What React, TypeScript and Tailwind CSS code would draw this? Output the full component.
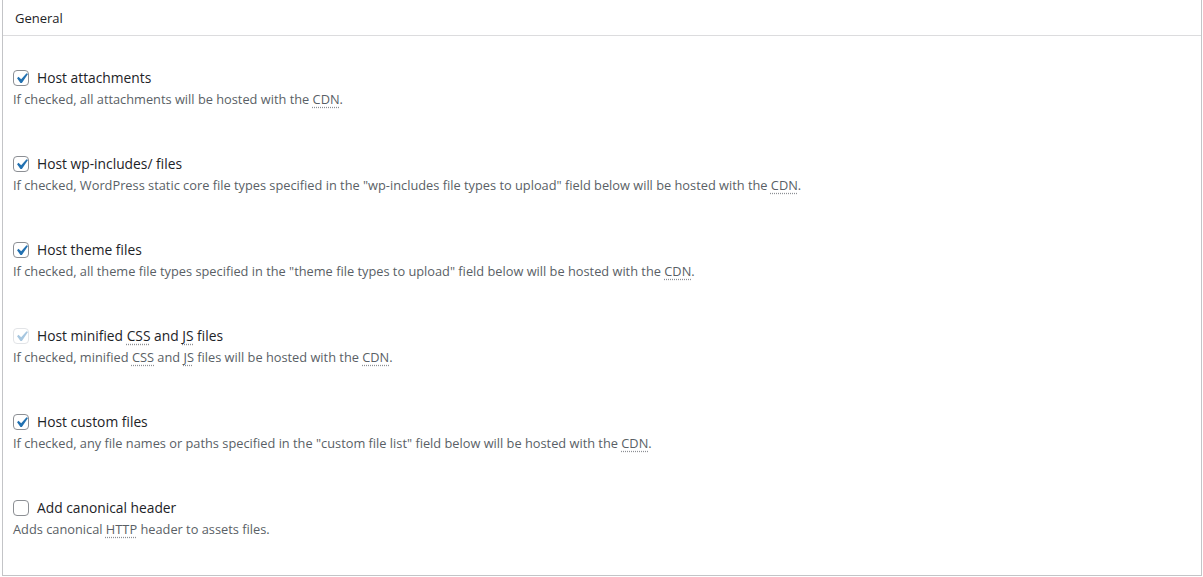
import type { ReactNode } from "react";

type Item = {
  label: ReactNode;
  desc: ReactNode;
  checked: boolean;
  disabled?: boolean;
};

function Abbr({ children }: { children: ReactNode }) {
  return (
    <abbr className="underline decoration-dotted decoration-[#8c8f94] underline-offset-[3px]">{children}</abbr>
  );
}

const items: Item[] = [
  {
    label: "Host attachments",
    desc: (
      <>
        If checked, all attachments will be hosted with the <Abbr>CDN</Abbr>.
      </>
    ),
    checked: true,
  },
  {
    label: "Host wp-includes/ files",
    desc: (
      <>
        If checked, WordPress static core file types specified in the "wp-includes file types to upload" field below
        will be hosted with the <Abbr>CDN</Abbr>.
      </>
    ),
    checked: true,
  },
  {
    label: "Host theme files",
    desc: (
      <>
        If checked, all theme file types specified in the "theme file types to upload" field below will be hosted with
        the <Abbr>CDN</Abbr>.
      </>
    ),
    checked: true,
  },
  {
    label: (
      <>
        Host minified <Abbr>CSS</Abbr> and <Abbr>JS</Abbr> files
      </>
    ),
    desc: (
      <>
        If checked, minified <Abbr>CSS</Abbr> and <Abbr>JS</Abbr> files will be hosted with the <Abbr>CDN</Abbr>.
      </>
    ),
    checked: true,
    disabled: true,
  },
  {
    label: "Host custom files",
    desc: (
      <>
        If checked, any file names or paths specified in the "custom file list" field below will be hosted with the{" "}
        <Abbr>CDN</Abbr>.
      </>
    ),
    checked: true,
  },
  {
    label: "Add canonical header",
    desc: (
      <>
        Adds canonical <Abbr>HTTP</Abbr> header to assets files.
      </>
    ),
    checked: false,
  },
];

function Checkbox({ checked, disabled }: { checked: boolean; disabled?: boolean }) {
  return (
    <span
      className={`flex h-4 w-4 shrink-0 items-center justify-center overflow-visible rounded-[4px] border bg-white ${
        disabled ? "border-[#e2e4e7]" : "border-[#8c8f94]"
      }`}
    >
      {checked && (
        <svg viewBox="0 0 20 20" className="-m-[4px] h-[21px] w-[21px] shrink-0">
          <path
            d="M14.83 4.89l1.34.94-5.81 8.38H9.02L5.78 9.67l1.34-1.25 2.57 2.4z"
            fill={disabled ? "#a7c7e0" : "#2271b1"}
          />
        </svg>
      )}
    </span>
  );
}

export default function App() {
  return (
    <div className="min-h-screen bg-white font-['Segoe_UI','Open_Sans',sans-serif] text-[13px] text-[#1d2327]">
      <div className="ml-[2px] mr-[1px] border-x border-b border-[#c3c4c7] bg-white">
        <div className="border-b border-[#dcdcde] px-[12px] pb-[8px] pt-[9px] text-[13px] leading-[18px]">General</div>
        <div className="flex flex-col gap-[46px] px-[10px] pb-[37px] pt-[32px]">
          {items.map((it, i) => (
            <div key={i}>
              <label className="flex h-5 items-center gap-[8px] text-[13.8px] leading-5">
                <Checkbox checked={it.checked} disabled={it.disabled} />
                <span>{it.label}</span>
              </label>
              <p className="mt-[2px] text-[12.8px] leading-[18px] text-[#5a5f66]">{it.desc}</p>
            </div>
          ))}
        </div>
      </div>
    </div>
  );
}
